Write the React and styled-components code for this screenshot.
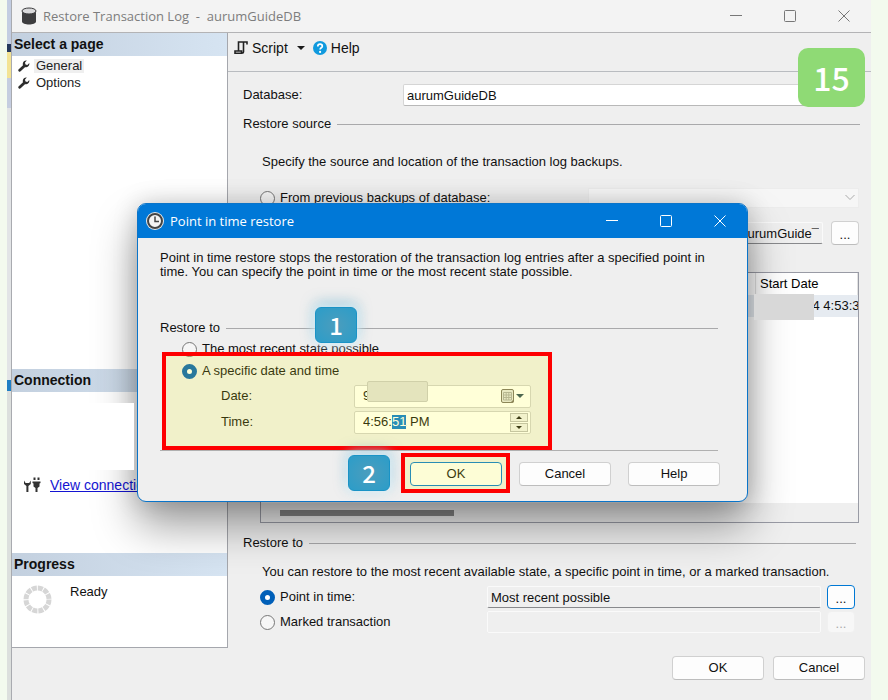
import React, { useEffect, useRef } from 'react';
import styled, { createGlobalStyle, css } from 'styled-components';

const uiFont = '"Liberation Sans", Arial, sans-serif';
const titleFont = '"Open Sans", "Noto Sans", sans-serif';

const GlobalStyle = createGlobalStyle`
  * {
    box-sizing: border-box;
  }

  body {
    margin: 0;
    background: #f3faee;
    color: #111;
    font-family: ${uiFont};
    font-size: 13px;
    line-height: 14px;
    overflow: hidden;
  }

  button, input, select {
    font: inherit;
    color: inherit;
    margin: 0;
  }
`;

const Page = styled.div`
  display: grid;
  grid-template-columns: 5px 1fr;
  min-height: 100vh;
  padding: 0 17px 0 7px;
`;

const BackdropStrip = styled.div`
  background: linear-gradient(
    #c3cde2 0 44px,
    #25375c 44px 52px,
    #f3e394 52px 78px,
    #c5cde0 78px 108px,
    #e2e4e6 108px 380px,
    #1f7fc4 380px 391px,
    #dcdfdd 391px
  );
  border-right: 1px solid #a9abb0;
`;

const Window = styled.div`
  position: relative;
  display: flex;
  flex-direction: column;
  background: #efefef;
  border-top-left-radius: 6px;
`;

const TitleBar = styled.header`
  display: flex;
  align-items: center;
  height: 33px;
  padding-left: 9px;
  background: #f3f3f3;
  border-bottom: 1px solid #b3b3b5;
  color: #7d7d7d;
  font-family: ${titleFont};
`;

const TitleText = styled.h1`
  flex: 1;
  margin: 0 0 0 6px;
  font-size: 13px;
  font-weight: 400;
  white-space: pre;
`;

const CaptionButton = styled.button`
  display: flex;
  align-items: center;
  justify-content: center;
  width: 54px;
  height: 30px;
  padding: 0;
  border: 0;
  background: transparent;
`;

const Columns = styled.div`
  display: grid;
  grid-template-columns: 216px 1fr;
`;

const Sidebar = styled.aside`
  display: flex;
  flex-direction: column;
  background: #fff;
  border-right: 1px solid #a5a7ad;
  border-bottom: 1px solid #a5a7ad;
`;

const SidePanel = styled.section`
  position: relative;
  height: ${props => props.$height};
  flex: ${props => (props.$grow ? 1 : 'none')};
`;

const SideHeading = styled.h2`
  margin: 0;
  padding: 0 2px;
  height: 23px;
  line-height: 22px;
  font-size: 14px;
  font-weight: 700;
  background: linear-gradient(90deg, #c3d0df, #d6e4f2);
`;

const PageList = styled.ul`
  list-style: none;
  margin: 0;
  padding: 1px 6px;
`;

const PageLink = styled.a`
  display: flex;
  align-items: center;
  gap: 4px;
  height: 17px;
  color: #222;
  text-decoration: none;

  span {
    padding: 0 2px;
    background: ${props => (props.$active ? '#efefef' : 'transparent')};
  }
`;

const ConnectionRow = styled.div`
  display: flex;
  align-items: center;
  gap: 8px;
  padding: 84px 0 0 11px;
`;

const ConnectionLink = styled.a`
  color: #1414d2;
  font-size: 14px;
  line-height: 18px;
  white-space: nowrap;
`;

const ServerMask = styled.div`
  position: absolute;
  z-index: 3;
  top: 34px;
  left: 1px;
  width: 121px;
  height: 67px;
  background: #fff;
`;

const ProgressRow = styled.div`
  display: flex;
  gap: 18px;
  padding: 9px 11px;
`;

const Main = styled.main`
  min-width: 0;
`;

const Toolbar = styled.div`
  display: flex;
  align-items: center;
  height: 39px;
  padding: 0 6px 9px;
  border-bottom: 1px solid #b9bcc0;
`;

const ToolButton = styled.button`
  display: flex;
  align-items: center;
  gap: 4px;
  padding: 0;
  margin-right: 8px;
  border: 0;
  background: transparent;
  font-size: 14px;

  svg:last-child:not(:first-child) {
    margin-left: 5px;
  }
`;

const Form = styled.div`
  padding: 12px 11px 14px 15px;
`;

const Row = styled.div`
  display: flex;
  align-items: center;
  min-height: ${props => props.$height || '22px'};
  margin-top: ${props => props.$top || '0'};
  padding-left: ${props => props.$indent || '0'};
  padding-right: ${props => props.$right || '0'};
`;

const FieldLabel = styled.label`
  flex: none;
  width: ${props => props.$width || 'auto'};
`;

const GroupTitle = styled.h3`
  display: flex;
  align-items: center;
  gap: 6px;
  height: 18px;
  margin: ${props => props.$top || '0'} ${props => props.$right || '0'} 0 0;
  font-size: 13px;
  font-weight: 400;

  &::after {
    content: '';
    flex: 1;
    height: 1px;
    background: #a9a9ab;
  }
`;

const Note = styled.p`
  margin: ${props => props.$top} 0 0 ${props => props.$indent || '0'};
`;

const TextField = styled.input`
  flex: 1;
  min-width: 0;
  height: 22px;
  padding: 0 3px;
  border: 1px solid ${props => (props.$flat ? '#fafafa' : '#d5d5d5')};
  border-bottom-color: ${props => (props.$flat && !props.disabled ? '#88898c' : props.$flat ? '#fafafa' : '#b8b8b8')};
  border-radius: 2px;
  background: ${props => (props.$flat ? '#efefef' : '#fff')};
  text-align: ${props => props.$align || 'left'};
  outline: 0;
`;

const Combo = styled.div`
  position: relative;
  flex: none;
  width: 271px;

  select {
    width: 100%;
    height: 20px;
    appearance: none;
    border: 1px solid #ececec;
    background: #f9f9f9;
  }

  svg {
    position: absolute;
    right: 4px;
    top: 6px;
  }
`;

const Option = styled.label`
  display: flex;
  align-items: center;
  gap: 5px;
  width: ${props => props.$width || 'auto'};
  flex: ${props => (props.$width ? 'none' : 1)};
`;

const Radio = styled.input`
  appearance: none;
  flex: none;
  width: 15px;
  height: 15px;
  border: 1px solid #777;
  border-radius: 50%;
  background: #f6f6f6;

  &:checked {
    border: 5px solid #005fb8;
    background: #fff;
  }
`;

const buttonFace = css`
  padding: 0;
  border: 1px solid #d0d0d0;
  border-bottom-color: #bdbdbd;
  border-radius: 4px;
  background: #fdfdfd;
`;

const PushButton = styled.button`
  ${buttonFace}
  width: 92px;
  height: 24px;
  ${props => props.$primary && 'border-color: #0078d4;'}
`;

const BrowseButton = styled.button`
  ${buttonFace}
  flex: none;
  width: 28px;
  height: 24px;
  padding-top: 4px;
  margin-left: ${props => props.$gap || '6px'};
  ${props => props.$primary && 'border-color: #0078d4;'}

  &:disabled {
    height: 22px;
    color: #aaa;
    border-color: #f0f0f0;
    background: #f7f7f7;
  }
`;

const GridFrame = styled.div`
  position: relative;
  display: flex;
  flex-direction: column;
  height: 251px;
  margin: 27px 1px 0 17px;
  border: 1px solid #999ba5;
  background: #fff;
`;

const BackupTable = styled.table`
  width: 100%;
  table-layout: fixed;
  border-collapse: collapse;
  flex: none;

  th, td {
    height: 22px;
    padding: 0 0 0 4px;
    text-align: left;
    font-weight: 400;
    white-space: nowrap;
    overflow: hidden;
  }

  th {
    border-right: 1px solid #e2e2e2;
    color: #000;
  }

  td {
    background: #e6ebf1;
  }

  td:last-child {
    padding-left: 57px;
  }
`;

const StartColumn = styled.col`
  width: 102px;
`;

const DateMask = styled.div`
  position: absolute;
  z-index: 3;
  top: 21px;
  right: 44px;
  width: 60px;
  height: 26px;
  background: #d8d8d8;
`;

const ScrollTrack = styled.div`
  margin-top: auto;
  height: 19px;
  padding: 7px 19px;
  background: #efefef;
`;

const ScrollThumb = styled.div`
  width: 174px;
  height: 6px;
  background: #858585;
`;

const Footer = styled.footer`
  display: flex;
  justify-content: flex-end;
  gap: ${props => props.$gap || '9px'};
  padding: ${props => props.$padding || '8px 6px 4px'};
`;

const StepBadge = styled.div`
  position: absolute;
  z-index: 5;
  top: 48px;
  right: 6px;
  width: 67px;
  height: 59px;
  border-radius: 10px;
  background: #8fda75;
  color: #fff;
  font-family: "Noto Sans CJK KR", "Noto Sans", sans-serif;
  font-size: 32px;
  font-weight: 500;
  line-height: 59px;
  text-align: center;
`;

const Dialog = styled.section`
  position: absolute;
  z-index: 2;
  top: 203px;
  left: 125px;
  width: 611px;
  border: 1px solid #0a74c9;
  border-radius: 9px;
  background: #efefef;
  box-shadow: 0 24px 44px rgba(0, 0, 0, 0.38), 0 0 24px rgba(0, 0, 0, 0.18);
`;

const DialogTitle = styled.header`
  display: flex;
  align-items: center;
  height: 34px;
  padding-left: 8px;
  border-radius: 8px 8px 0 0;
  background: #0078d7;
  color: #fff;
  font-family: ${titleFont};
`;

const DialogBody = styled.div`
  padding: 13px 29px 0 22px;
`;

const Rule = styled.hr`
  height: 1px;
  margin: 15px 0 0;
  border: 0;
  background: #b0b0b0;
`;

const Picker = styled.div`
  display: flex;
  align-items: center;
  width: 177px;
  height: 23px;
  padding-right: 2px;
  border: 1px solid #d0d0d0;
  border-radius: 2px;
  background: #fff;

  input {
    flex: 1;
    min-width: 0;
    padding: 0 0 0 8px;
    border: 0;
    outline: 0;
    background: transparent;
    caret-color: transparent;
  }

  input::selection {
    background: #0078d7;
    color: #fff;
  }
`;

const PickerButton = styled.button`
  display: flex;
  align-items: center;
  gap: 2px;
  padding: 0 4px;
  border: 0;
  background: transparent;
`;

const Spinner = styled.div`
  display: grid;
  gap: 1px;

  button {
    display: flex;
    align-items: center;
    justify-content: center;
    width: 18px;
    height: 9px;
    padding: 0;
    border: 1px solid #bbb;
    background: #f0f0f0;
  }
`;

const ValueMask = styled.div`
  position: absolute;
  top: 177px;
  left: 229px;
  width: 61px;
  height: 21px;
  border: 1px solid #c8c8c8;
  border-radius: 2px;
  background: #dfdfdf;
`;

const Highlight = styled.div`
  position: absolute;
  pointer-events: none;
  top: ${props => props.$top};
  left: ${props => props.$left};
  width: ${props => props.$width};
  height: ${props => props.$height};
  border: 4px solid #fe0000;
  background: rgba(255, 255, 10, 0.16);
`;

const Marker = styled.div`
  position: absolute;
  top: ${props => props.$top};
  left: ${props => props.$left};
  width: 42px;
  height: 36px;
  border: 1px solid #1a93c6;
  border-radius: 6px;
  background: radial-gradient(#4b9dbd, #2b9dc9);
  box-shadow: 0 0 10px 2px rgba(225, 243, 250, 0.9), 0 -4px 14px rgba(60, 150, 185, 0.5);
  color: #fff;
  font-family: "Noto Sans CJK KR", "Noto Sans", sans-serif;
  font-size: 24px;
  font-weight: 500;
  line-height: 34px;
  text-align: center;
`;

const CaptionButtons = ({ color }) => (
  <>
    <CaptionButton aria-label="Minimize">
      <svg width="12" height="12" stroke={color}><path d="M0 5.5h12" /></svg>
    </CaptionButton>
    <CaptionButton aria-label="Maximize">
      <svg width="12" height="12" fill="none" stroke={color}><rect x="0.5" y="0.5" width="11" height="11" rx="1" /></svg>
    </CaptionButton>
    <CaptionButton aria-label="Close">
      <svg width="12" height="12" stroke={color}><path d="M0.5 0.5l11 11M11.5 0.5l-11 11" /></svg>
    </CaptionButton>
  </>
);

const DatabaseIcon = () => (
  <svg width="16" height="18" viewBox="0 0 16 18">
    <path d="M1 4v10.500c0 4 14 4 14 0V4z" fill="#3d3d3f" />
    <ellipse cx="8" cy="4" rx="7" ry="3" fill="#d9d9db" stroke="#3d3d3f" />
  </svg>
);

const WrenchIcon = () => (
  <svg width="12" height="12" viewBox="0 0 12 12">
    <path d="M1.700 10.300L6.500 5.800" stroke="#2d2d2d" strokeWidth="2.800" strokeLinecap="round" />
    <path d="M8.800 0.600L7 2.400l0.400 2 2 0.500L11.300 3c0.400 2-0.800 4.200-3 4.300C6 7.500 4.400 5.700 4.800 3.600 5.100 1.500 7 0.200 8.800 0.600z" fill="#2d2d2d" />
  </svg>
);

const ScriptIcon = () => (
  <svg width="14" height="13" viewBox="0 0 14 13" fill="none" stroke="#222" strokeWidth="1.600">
    <path d="M13 3.500V1H4.500v8.500M9.500 1.500v9.500c0 1-1 1.200-1.700 1.200H1V10h6.500v2" />
  </svg>
);

const HelpIcon = () => (
  <svg width="14" height="14" viewBox="0 0 14 14">
    <circle cx="7" cy="7" r="7" fill="#109ade" />
    <path d="M4.800 5.400c0-3 4.500-2.800 4.500-0.200C9.300 6.800 7.100 6.800 7.100 8.600" fill="none" stroke="#fff" strokeWidth="1.700" />
    <circle cx="7.100" cy="10.900" r="1.100" fill="#fff" />
  </svg>
);

const Arrow = ({ up, fill = '#1a1a1a', size = 8 }) => (
  <svg width={size} height={size / 2} viewBox="0 0 8 4">
    <path d={up ? 'M0 4l4-4 4 4z' : 'M0 0h8L4 4z'} fill={fill} />
  </svg>
);

const PlugIcon = () => (
  <svg width="19" height="16" viewBox="0 0 19 16">
    <path d="M1 3.500v3.500l2.400 2V15h2V9l2.400-2V3.500L6.200 6H2.600z" fill="#333" />
    <path d="M9.500 4.500h8v1.500l-1 0.500v3l-2 1.500v4h-2v-4l-2-1.500v-3l-1-0.500z" fill="#333" />
    <path d="M10.500 0.500h2v2.500h-2zM14.500 0.500h2v2.500h-2z" fill="#333" />
  </svg>
);

const ProgressRing = () => (
  <svg width="29" height="29" viewBox="0 0 29 29">
    <circle cx="14.500" cy="14.500" r="11.500" fill="none" stroke="#d6d6d6" strokeWidth="5" strokeDasharray="5.020 1" />
  </svg>
);

const ClockIcon = () => (
  <svg width="18" height="18" viewBox="0 0 18 18">
    <circle cx="9" cy="9" r="9" fill="#e8e8e8" />
    <circle cx="9" cy="9" r="7" fill="#f4f4f4" stroke="#444" strokeWidth="2" />
    <path d="M9 4.500V9.500h4" fill="none" stroke="#444" strokeWidth="1.500" />
  </svg>
);

const CalendarIcon = () => (
  <svg width="13" height="14" viewBox="0 0 13 14">
    <rect x="0.500" y="0.500" width="12" height="13" rx="1.500" fill="#e4e4e4" stroke="#776f66" />
    <path d="M2.500 3.500h8v7.500h-8zM2.500 6h8M2.500 8.500h8M5.200 3.500v7.500M7.800 3.500v7.500" fill="none" stroke="#aaa" />
    <path d="M12.500 10.500l-3 3h3z" fill="#776f66" />
  </svg>
);

const PointInTimeDialog = () => {
  const timeRef = useRef(null);

  // the seconds segment is the one being edited
  useEffect(() => {
    timeRef.current.focus();
    timeRef.current.setSelectionRange(5, 7);
  }, []);

  return (
    <Dialog role="dialog" aria-labelledby="dialog-title">
      <DialogTitle>
        <ClockIcon />
        <TitleText as="h2" id="dialog-title">Point in time restore</TitleText>
        <CaptionButtons color="#fff" />
      </DialogTitle>
      <DialogBody>
        <Note $top="0">
          Point in time restore stops the restoration of the transaction log entries after a specified
          point in time. You can specify the point in time or the most recent state possible.
        </Note>
        <GroupTitle $top="40px">Restore to</GroupTitle>
        <Row $top="1px" $indent="22px">
          <Option>
            <Radio type="radio" name="target" />
            The most recent state possible
          </Option>
        </Row>
        <Row $indent="22px">
          <Option>
            <Radio type="radio" name="target" defaultChecked />
            A specific date and time
          </Option>
        </Row>
        <Row $top="1px" $height="26px" $indent="61px">
          <FieldLabel $width="133px" htmlFor="date">Date:</FieldLabel>
          <Picker>
            <input id="date" defaultValue="9" />
            <PickerButton aria-label="Open calendar">
              <CalendarIcon />
              <Arrow fill="#2b4a5c" />
            </PickerButton>
          </Picker>
        </Row>
        <Row $height="26px" $indent="61px">
          <FieldLabel $width="133px" htmlFor="time">Time:</FieldLabel>
          <Picker>
            <input id="time" ref={timeRef} defaultValue="4:56:51 PM" />
            <Spinner>
              <button aria-label="Increase"><Arrow up size={6} /></button>
              <button aria-label="Decrease"><Arrow size={6} /></button>
            </Spinner>
          </Picker>
        </Row>
        <Rule />
      </DialogBody>
      <Footer $gap="17px" $padding="11px 27px 15px">
        <PushButton $primary>OK</PushButton>
        <PushButton>Cancel</PushButton>
        <PushButton>Help</PushButton>
      </Footer>
      <ValueMask />
      <Highlight $top="148px" $left="24px" $width="390px" $height="98px" />
      <Highlight $top="249px" $left="263px" $width="109px" $height="40px" />
      <Marker $top="103px" $left="177px">1</Marker>
      <Marker $top="251px" $left="210px">2</Marker>
    </Dialog>
  );
};

const App = () => (
  <>
    <GlobalStyle />
    <Page>
      <BackdropStrip />
      <Window>
        <TitleBar>
          <DatabaseIcon />
          <TitleText>{'Restore Transaction Log  -  aurumGuideDB'}</TitleText>
          <CaptionButtons color="#777" />
        </TitleBar>
        <Columns>
          <Sidebar>
            <SidePanel $grow>
              <SideHeading>Select a page</SideHeading>
              <PageList>
                <li><PageLink href="#general" $active><WrenchIcon /><span>General</span></PageLink></li>
                <li><PageLink href="#options"><WrenchIcon /><span>Options</span></PageLink></li>
              </PageList>
            </SidePanel>
            <SidePanel $height="184px">
              <SideHeading>Connection</SideHeading>
              <ConnectionRow>
                <PlugIcon />
                <ConnectionLink href="#connection">View connection properties</ConnectionLink>
              </ConnectionRow>
              <ServerMask />
            </SidePanel>
            <SidePanel $height="94px">
              <SideHeading>Progress</SideHeading>
              <ProgressRow>
                <ProgressRing />
                <span>Ready</span>
              </ProgressRow>
            </SidePanel>
          </Sidebar>
          <Main>
            <Toolbar>
              <ToolButton><ScriptIcon />Script<Arrow /></ToolButton>
              <ToolButton><HelpIcon />Help</ToolButton>
            </Toolbar>
            <Form>
              <Row>
                <FieldLabel $width="160px" htmlFor="database">Database:</FieldLabel>
                <TextField id="database" defaultValue="aurumGuideDB" />
              </Row>
              <GroupTitle $top="9px">Restore source</GroupTitle>
              <Note $top="22px" $indent="19px">
                Specify the source and location of the transaction log backups.
              </Note>
              <Row $top="18px" $indent="17px" $right="1px">
                <Option>
                  <Radio type="radio" name="source" />
                  From previous backups of database:
                </Option>
                <Combo>
                  <select aria-label="Previous database" disabled />
                  <svg width="10" height="7" fill="none" stroke="#aaa"><path d="M0.500 1l4.500 4.500L9.500 1" /></svg>
                </Combo>
              </Row>
              <Row $top="12px" $height="24px" $indent="17px" $right="1px">
                <Option $width="228px">
                  <Radio type="radio" name="source" defaultChecked />
                  From file or tape:
                </Option>
                <TextField aria-label="Backup file" $flat $align="right" defaultValue="aurumGuide¯" />
                <BrowseButton $gap="8px" aria-label="Browse backup files">...</BrowseButton>
              </Row>
              <GridFrame>
                <BackupTable>
                  <colgroup>
                    <col />
                    <StartColumn />
                  </colgroup>
                  <thead>
                    <tr><th aria-label="Name" /><th>Start Date</th></tr>
                  </thead>
                  <tbody>
                    <tr><td /><td>4 4:53:3</td></tr>
                  </tbody>
                </BackupTable>
                <ScrollTrack><ScrollThumb /></ScrollTrack>
                <DateMask />
              </GridFrame>
              <GroupTitle $top="11px" $right="4px">Restore to</GroupTitle>
              <Note $top="13px" $indent="19px">
                You can restore to the most recent available state, a specific point in time, or a marked transaction.
              </Note>
              <Row $top="6px" $height="24px" $indent="17px" $right="5px">
                <Option $width="227px">
                  <Radio type="radio" name="restore" defaultChecked />
                  Point in time:
                </Option>
                <TextField aria-label="Point in time" $flat defaultValue="Most recent possible" />
                <BrowseButton $primary aria-label="Choose point in time">...</BrowseButton>
              </Row>
              <Row $top="1px" $height="24px" $indent="17px" $right="5px">
                <Option $width="227px">
                  <Radio type="radio" name="restore" />
                  Marked transaction
                </Option>
                <TextField aria-label="Marked transaction" $flat disabled />
                <BrowseButton disabled aria-label="Choose marked transaction">...</BrowseButton>
              </Row>
            </Form>
          </Main>
        </Columns>
        <Footer>
          <PushButton>OK</PushButton>
          <PushButton>Cancel</PushButton>
        </Footer>
        <StepBadge>15</StepBadge>
        <PointInTimeDialog />
      </Window>
    </Page>
  </>
);

export default App;
